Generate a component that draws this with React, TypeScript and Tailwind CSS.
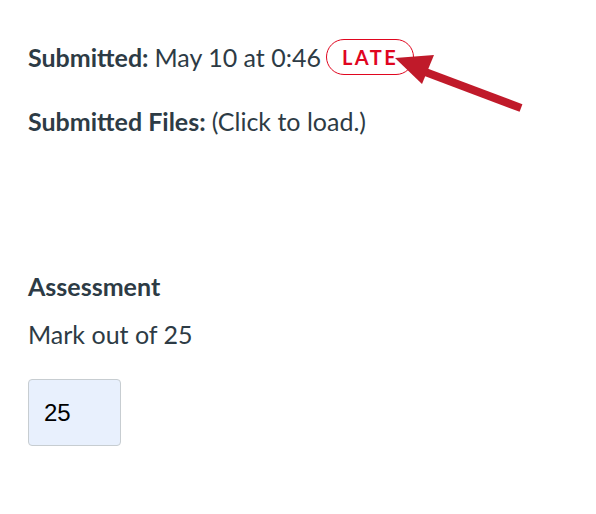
import React from "react";

export default function App() {
  return (
    <div className="relative w-[596px] h-[514px] bg-white text-[#2d3b45]" style={{ fontFamily: "Lato, 'Noto Sans', sans-serif" }}>
      <div className="pt-[39px] pl-[28px] flex flex-col">
        <div className="flex items-center h-[36px] text-[25px] leading-[30px]">
          <span className="font-bold">Submitted:</span>
          <span className="ml-[6px]">May 10 at 0:46</span>
          <span className="ml-[5px] h-[36px] px-[15px] flex items-center rounded-full border border-[#e0061f] text-[#e0061f] text-[20px] font-bold tracking-[2.5px]">LATE</span>
        </div>
        <div className="mt-[31px] text-[25px] leading-[30px]">
          <span className="font-bold">Submitted Files:</span>
          <span className="ml-[6px]">(Click to load.)</span>
        </div>
        <div className="mt-[135px] text-[25px] font-bold leading-[30px]">Assessment</div>
        <div className="mt-[18px] text-[25px] leading-[30px]">Mark out of 25</div>
        <div className="mt-[30px] w-[93px] h-[67px] rounded-[4px] border border-[#c7cdd1] bg-[#e8f0fd] flex items-center pl-[15px] text-[24px] text-black" style={{ fontFamily: "'Liberation Sans', Arial, sans-serif" }}>25</div>
      </div>
      <svg className="absolute left-0 top-0" width="596" height="514" viewBox="0 0 596 514">
        <line x1="521" y1="108" x2="420" y2="70" stroke="#c01a2a" strokeWidth="8" />
        <polygon points="395,58 434,55 422,84" fill="#c01a2a" />
      </svg>
    </div>
  );
}
